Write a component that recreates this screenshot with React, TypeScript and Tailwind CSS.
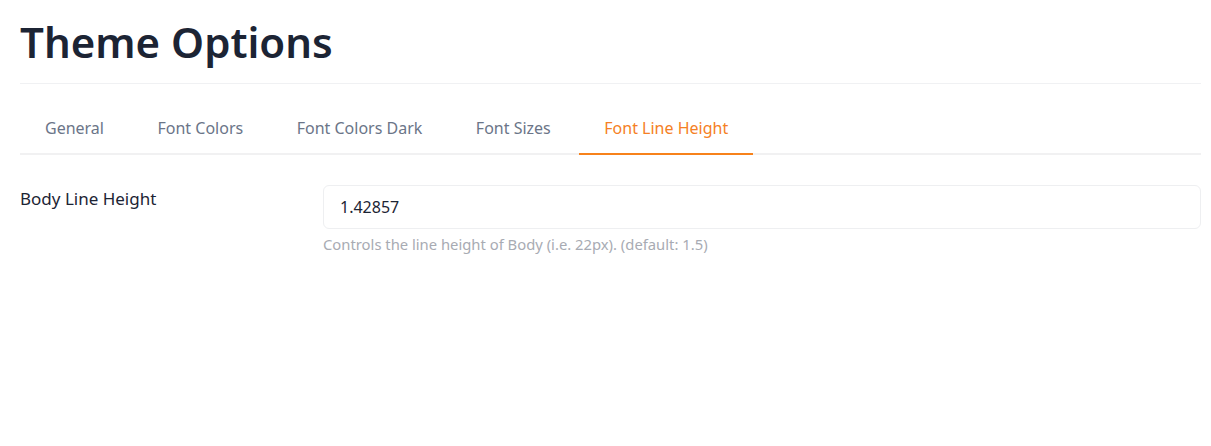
import React from "react";

export default function App() {
  const tabs = ["General", "Font Colors", "Font Colors Dark", "Font Sizes", "Font Line Height"];
  const active = 4;
  return (
    <div className="w-[1211px] h-[446px] bg-white pl-[20px] pr-[10px] pt-[14px]" style={{ fontFamily: '"Noto Sans", "Open Sans", sans-serif' }}>
      <h1 className="text-[42px] leading-[56px] font-semibold text-[#1c2434] pb-[13px] border-b border-[#f0f1f3]">
        Theme Options
      </h1>
      <div className="flex gap-[3.5px] border-b-2 border-[#f1f1f2] mt-[16px]">
        {tabs.map((t, i) => (
          <div
            key={t}
            className={
              i === active
                ? "px-[25px] pt-[17px] pb-[14px] text-[16px] leading-[22px] text-[#f58025] border-b-2 border-[#f7821b] -mb-[2px]"
                : "px-[25px] pt-[17px] pb-[14px] text-[16px] leading-[22px] text-[#6b7588] border-b-2 border-transparent -mb-[2px]"
            }
          >
            {t}
          </div>
        ))}
      </div>
      <div className="flex mt-[30px]">
        <div className="w-[303px] shrink-0 pt-[3px] text-[17px] leading-[22px] text-[#1c2434]">Body Line Height</div>
        <div className="flex-1">
          <div className="h-[44px] border border-[#eeeff1] rounded-[6px] flex items-center px-[16px] text-[16px] text-[#1c2434]">
            1.42857
          </div>
          <div className="mt-[6px] text-[14.8px] leading-[18px] text-[#a8abb3]">
            Controls the line height of Body (i.e. 22px). (default: 1.5)
          </div>
        </div>
      </div>
    </div>
  );
}
